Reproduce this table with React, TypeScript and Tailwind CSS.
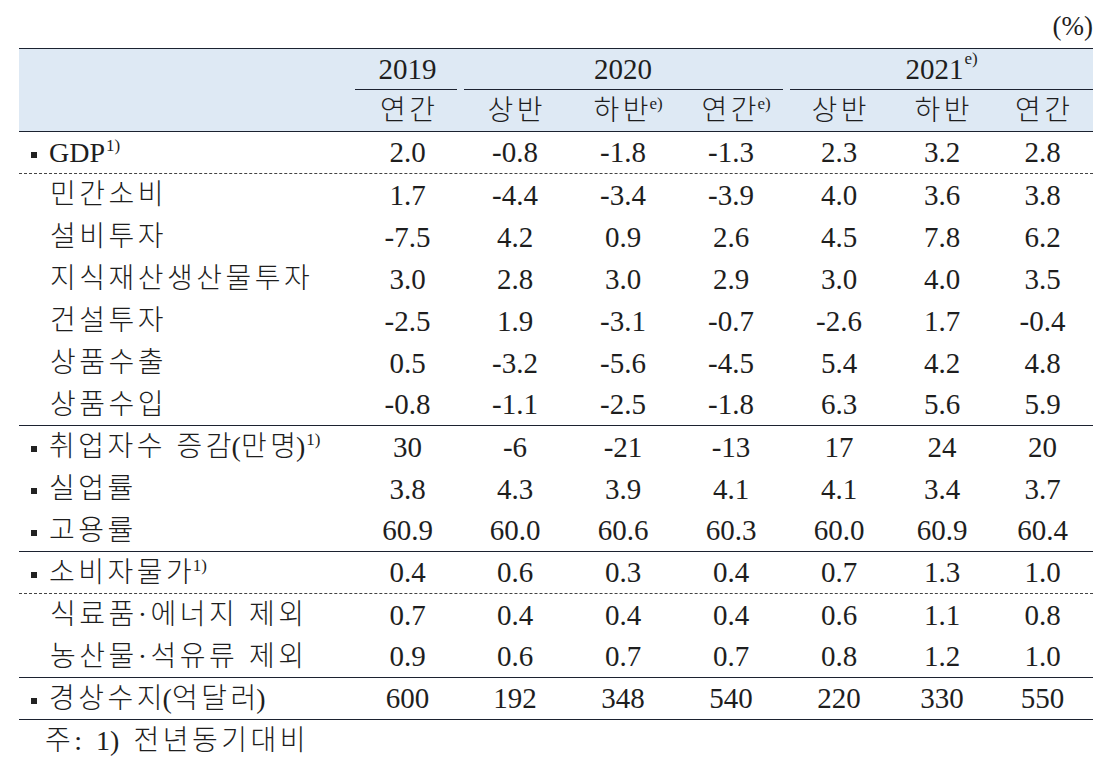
import React from "react";

type Row = {
  label: React.ReactNode;
  bullet?: boolean;
  values: string[];
  border: "dashed" | "solid" | "none";
};

const cols = "grid grid-cols-[336px_105px_110px_106px_110px_106px_100px_101px]";

const Sup = ({ children }: { children: React.ReactNode }) => (
  <span className="relative -top-[11px] ml-[1px] text-[17px] leading-none tracking-normal">{children}</span>
);

// hangul runs get a little tracking so they take the width of the original myeongjo face;
// the last glyph is left without it so nothing trails after the word
const K = ({ t }: { t: string }) => (
  <span>
    <span className="tracking-[3.5px]">{t.slice(0, -1)}</span>
    {t.slice(-1)}
  </span>
);

const rows: Row[] = [
  { label: <>GDP<Sup>1)</Sup></>, bullet: true, values: ["2.0", "-0.8", "-1.8", "-1.3", "2.3", "3.2", "2.8"], border: "dashed" },
  { label: <K t="민간소비" />, values: ["1.7", "-4.4", "-3.4", "-3.9", "4.0", "3.6", "3.8"], border: "none" },
  { label: <K t="설비투자" />, values: ["-7.5", "4.2", "0.9", "2.6", "4.5", "7.8", "6.2"], border: "none" },
  { label: <K t="지식재산생산물투자" />, values: ["3.0", "2.8", "3.0", "2.9", "3.0", "4.0", "3.5"], border: "none" },
  { label: <K t="건설투자" />, values: ["-2.5", "1.9", "-3.1", "-0.7", "-2.6", "1.7", "-0.4"], border: "none" },
  { label: <K t="상품수출" />, values: ["0.5", "-3.2", "-5.6", "-4.5", "5.4", "4.2", "4.8"], border: "none" },
  { label: <K t="상품수입" />, values: ["-0.8", "-1.1", "-2.5", "-1.8", "6.3", "5.6", "5.9"], border: "solid" },
  { label: <><K t="취업자수 증감" />(<K t="만명" />)<Sup>1)</Sup></>, bullet: true, values: ["30", "-6", "-21", "-13", "17", "24", "20"], border: "none" },
  { label: <K t="실업률" />, bullet: true, values: ["3.8", "4.3", "3.9", "4.1", "4.1", "3.4", "3.7"], border: "none" },
  { label: <K t="고용률" />, bullet: true, values: ["60.9", "60.0", "60.6", "60.3", "60.0", "60.9", "60.4"], border: "solid" },
  { label: <><K t="소비자물가" /><Sup>1)</Sup></>, bullet: true, values: ["0.4", "0.6", "0.3", "0.4", "0.7", "1.3", "1.0"], border: "dashed" },
  { label: <K t="식료품·에너지 제외" />, values: ["0.7", "0.4", "0.4", "0.4", "0.6", "1.1", "0.8"], border: "none" },
  { label: <K t="농산물·석유류 제외" />, values: ["0.9", "0.6", "0.7", "0.7", "0.8", "1.2", "1.0"], border: "solid" },
  { label: <><K t="경상수지" />(<K t="억달러" />)</>, bullet: true, values: ["600", "192", "348", "540", "220", "330", "550"], border: "solid" },
];

export default function App() {
  return (
    <div
      className="w-[1110px] h-[768px] bg-white text-[#1e1e1e] font-light text-[28px] leading-none"
      style={{ fontFamily: "'Liberation Serif', 'Noto Sans CJK KR', serif" }}
    >
      <div className="pl-[19px] w-[1093px]">
        {/* unit */}
        <div className="h-[48px] flex items-center justify-end pt-[4px] text-[27px]">(%)</div>

        {/* header */}
        <div className="bg-[#dee9f4] border-t-[1.5px] border-b-[1.5px] border-[#1c2230]">
          <div className={`${cols} h-[41px] text-[29px]`}>
            <div />
            <div className="flex flex-col">
              <div className="flex-1 flex items-center justify-center pt-[2px]">2019</div>
              <div className="h-[1.5px] bg-[#1c2230] mr-[3px]" />
            </div>
            <div className="col-span-3 flex flex-col">
              <div className="flex-1 flex items-center justify-center pt-[2px]">2020</div>
              <div className="h-[1.5px] bg-[#1c2230] ml-[4px] mr-[3px]" />
            </div>
            <div className="col-span-3 flex flex-col">
              <div className="flex-1 flex items-center justify-center pt-[2px] pl-[4px]">
                2021<Sup>e)</Sup>
              </div>
              <div className="h-[1.5px] bg-[#1c2230] ml-[4px]" />
            </div>
          </div>
          <div className={`${cols} h-[41px] items-center`}>
            <div />
            <div className="text-center"><K t="연간" /></div>
            <div className="text-center"><K t="상반" /></div>
            <div className="text-center pl-[10px]"><K t="하반" /><Sup>e)</Sup></div>
            <div className="text-center pl-[10px]"><K t="연간" /><Sup>e)</Sup></div>
            <div className="text-center"><K t="상반" /></div>
            <div className="text-center"><K t="하반" /></div>
            <div className="text-center"><K t="연간" /></div>
          </div>
        </div>

        {/* body */}
        {rows.map((row, i) => (
          <div
            key={i}
            className={`${cols} h-[42px] items-center ${
              row.border === "dashed"
                ? "border-b border-dashed border-[#444]"
                : row.border === "solid"
                ? "border-b-[1.5px] border-[#1c2230]"
                : ""
            }`}
          >
            <div className={`flex items-center whitespace-nowrap ${row.bullet ? "pl-[12px]" : "pl-[31px]"}`}>
              {row.bullet && <span className="inline-block w-[6px] h-[6px] bg-[#222] mr-[12px] mt-[4px]" />}
              <span>{row.label}</span>
            </div>
            {row.values.map((v, j) => (
              <div key={j} className="text-center text-[29px]">
                {v}
              </div>
            ))}
          </div>
        ))}

        {/* note */}
        <div className="h-[42px] flex items-center pl-[26px] whitespace-nowrap">
          <K t="주:" />
          <span className="ml-[14px]">1)</span>
          <span className="ml-[14px]"><K t="전년동기대비" /></span>
        </div>
      </div>
    </div>
  );
}
